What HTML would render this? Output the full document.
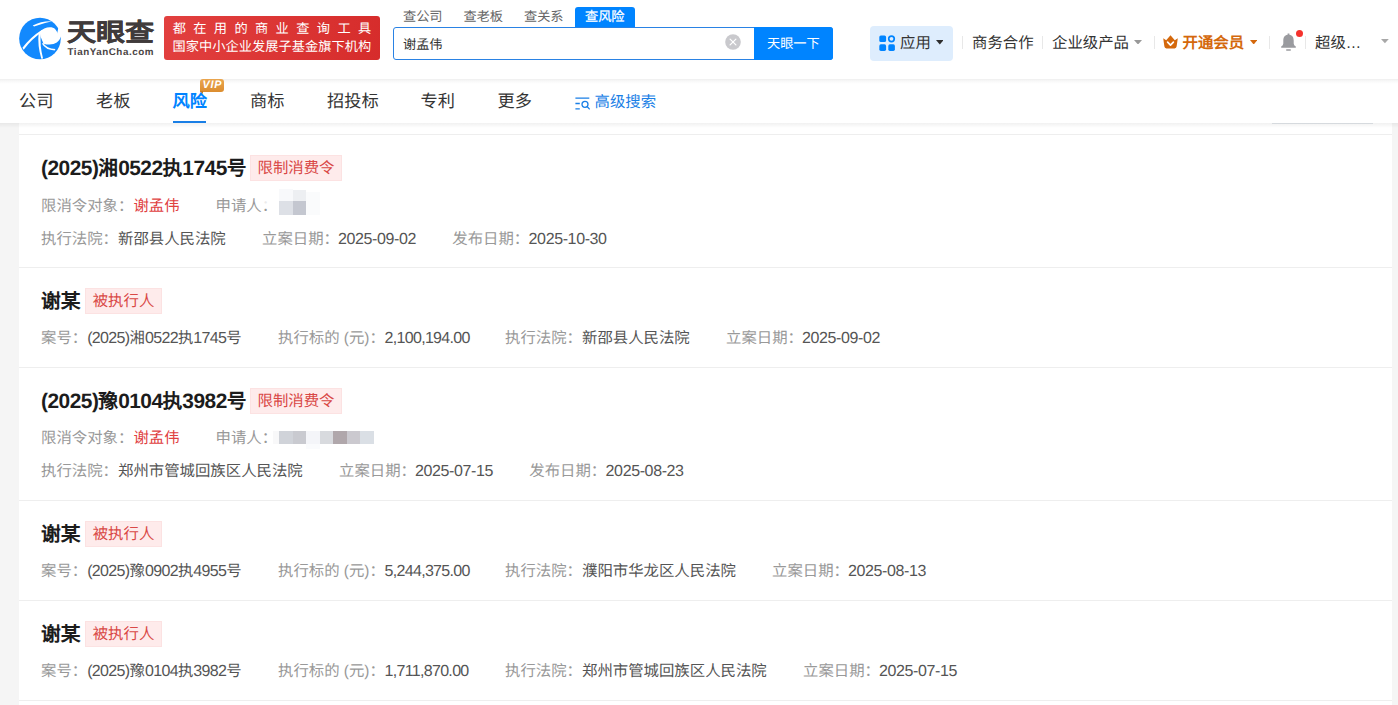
<!DOCTYPE html>
<html lang="zh-CN"><head><meta charset="utf-8"><title>天眼查</title><style>
*{margin:0;padding:0;box-sizing:border-box}
html,body{width:1398px;height:705px;overflow:hidden;background:#f5f5f5}
body{font-family:"Liberation Sans",sans-serif;color:#333;position:relative;font-size:15.4px;text-rendering:geometricPrecision}
.abs{position:absolute}
.t{position:absolute;white-space:nowrap;line-height:24px;height:24px;font-size:15.4px}
.hdr{position:absolute;left:0;top:0;width:1398px;height:79px;background:#fff}
.sub{position:absolute;left:0;top:79px;width:1398px;height:44px;background:linear-gradient(180deg,#efefef 0,#f8f8f8 2px,#fff 5px)}
.subsh{position:absolute;left:0;top:123px;width:1398px;height:5px;background:linear-gradient(180deg,rgba(0,0,0,.055),rgba(0,0,0,0))}
.card{position:absolute;left:19px;top:123px;width:1373px;height:582px;background:#fff}
.hr{position:absolute;left:19px;width:1373px;height:1px;background:#eeeeee}
i{font-style:normal}
.l{font-size:16px}
.tl{font-size:20.9px;position:relative;top:-0.8px}
.lb{color:#999}
.vl{color:#555}
.rd{color:#e0403f}
.ttl{position:absolute;white-space:nowrap;font-weight:bold;font-size:19.8px;line-height:28px;height:28px;color:#1c1c1c}
.tag{position:absolute;height:26px;line-height:25px;border:1px solid #fce2e2;background:#feebeb;color:#d94846;font-size:15.4px;text-align:center;white-space:nowrap}
.nav{position:absolute;white-space:nowrap;font-size:17.2px;line-height:26px;height:26px;color:#333;top:88.3px}
.hn{position:absolute;white-space:nowrap;font-size:15.4px;line-height:22px;height:22px;top:33px;color:#333}
.dv{position:absolute;top:36px;width:1px;height:13px;background:#e8e8e8}
.st{position:absolute;white-space:nowrap;font-size:13.2px;line-height:18px;height:18px;top:8px;color:#666}
</style></head><body>
<div class="hdr"></div>
<svg class="abs" style="left:14px;top:12px" width="56" height="52" viewBox="0 0 759 705">
<circle cx="352" cy="360" r="282" fill="#1389fd"/>
<g fill="#fff">
<path d="M348,272 C400,214 505,182 562,236 C585,260 593,290 587,308 L598,225 L680,225 L680,337 L634,337 C610,425 520,462 400,430 L362,340 Z"/>
<path d="M376,244 Q228,336 114,486 L131,512 Q242,364 390,266 Z"/>
<path d="M334,280 Q316,450 370,634 L394,630 Q346,450 364,290 Z"/>
<path d="M394,418 Q440,498 562,503 L552,522 Q425,516 380,432 Z"/>
<path d="M254,184 Q370,120 516,126 Q395,152 272,196 Z"/>
</g>
<path d="M586,308 C592,280 596,250 598,222 L640,300 Z" fill="#fff"/>
</svg>
<div class="abs" style="left:66.5px;top:17.3px;font-size:25px;line-height:32px;font-weight:bold;color:#403b3b;-webkit-text-stroke:0.35px #403b3b;white-space:nowrap;transform:scaleX(1.16);transform-origin:0 0" id="logot">天眼查</div>
<div class="abs" style="left:67.5px;top:46.1px;font-size:9.8px;line-height:14px;font-weight:bold;color:#4a4444;white-space:nowrap;letter-spacing:0.55px" id="logoe">TianYanCha.com</div>
<div class="abs" style="left:164px;top:16px;width:216px;height:44px;border-radius:3px;background:linear-gradient(100deg,#e2403f,#d62c2b)"></div>
<div class="abs" id="bn1" style="left:172.7px;top:19.5px;font-size:13.2px;line-height:18px;color:#fff;white-space:nowrap;letter-spacing:7.4px">都在用的商业查询工具</div>
<div class="abs" id="bn2" style="left:172.6px;top:38px;font-size:13.2px;line-height:18px;color:#fff;white-space:nowrap;letter-spacing:0.05px">国家中小企业发展子基金旗下机构</div>
<div class="st" style="left:403px">查公司</div>
<div class="st" style="left:463.5px">查老板</div>
<div class="st" style="left:524px">查关系</div>
<div class="abs" style="left:575px;top:7px;width:60px;height:21px;background:#0084ff;border-radius:3px 3px 0 0"></div>
<div class="st" style="left:585px;color:#fff;-webkit-text-stroke:0.25px #fff">查风险</div>
<div class="abs" style="left:393px;top:27px;width:440px;height:33px;border:1px solid #2a82e4;border-radius:3px;background:#fff"></div>
<div class="abs" style="left:403px;top:35.7px;font-size:13.2px;line-height:18px;color:#333;white-space:nowrap">谢孟伟</div>
<div class="abs" style="left:754px;top:27px;width:79px;height:33px;background:#0084ff;border-radius:0 3px 3px 0"></div>
<div class="abs" style="left:767px;top:35px;font-size:13.2px;line-height:18px;color:#fff;white-space:nowrap">天眼一下</div>
<svg class="abs" style="left:725px;top:34.2px" width="16" height="16" viewBox="0 0 16 16"><circle cx="8" cy="8" r="7.8" fill="#c9c9cd"/><path d="M5.1,5.1 L10.9,10.9 M10.9,5.1 L5.1,10.9" stroke="#fff" stroke-width="1.25" stroke-linecap="round"/></svg>
<div class="abs" style="left:870px;top:26px;width:83px;height:34.7px;background:#deedfd;border-radius:4px"></div>
<svg class="abs" style="left:879px;top:35px" width="17" height="17" viewBox="0 0 17 17"><g fill="#0084ff"><rect x="0.3" y="0.5" width="6.8" height="6.6" rx="1.6"/><rect x="0.3" y="9.3" width="6.8" height="6.6" rx="1.6"/><rect x="9.3" y="9.3" width="6.6" height="6.6" rx="1.6"/></g><circle cx="12.5" cy="3.8" r="2.75" fill="none" stroke="#0084ff" stroke-width="1.7"/></svg>
<div class="hn" style="left:900px">应用</div>
<svg class="abs" style="left:935.8px;top:40.3px" width="7.6" height="4.6" viewBox="0 0 7.6 4.6"><path d="M0,0 L7.6,0 L3.8,4.6 Z" fill="#2e2e2e"/></svg>
<div class="dv" style="left:962px"></div>
<div class="dv" style="left:1042px"></div>
<div class="dv" style="left:1153.5px"></div>
<div class="dv" style="left:1269px"></div>
<div class="dv" style="left:1304.5px"></div>
<div class="hn" style="left:972px">商务合作</div>
<div class="hn" style="left:1052px">企业级产品</div>
<svg class="abs" style="left:1133.8px;top:39.9px" width="8" height="4.6" viewBox="0 0 8 4.6"><path d="M0,0 L8,0 L4.0,4.6 Z" fill="#999"/></svg>
<svg class="abs" style="left:1163px;top:35px" width="15" height="14" viewBox="0 0 15 14"><path d="M0.2,3.2 L3.2,5.2 L7.5,0.2 L11.8,5.2 L14.8,3.2 L13.6,11.6 Q13.4,13.4 11.6,13.4 L3.4,13.4 Q1.6,13.4 1.4,11.6 Z" fill="#d4680c"/><path d="M4.6,7.2 L7.5,10.2 L10.4,7.2" fill="none" stroke="#fff" stroke-width="1.7" stroke-linecap="round" stroke-linejoin="round"/></svg>
<div class="hn" style="left:1182.5px;color:#d4680c;font-weight:bold">开通会员</div>
<svg class="abs" style="left:1249.8px;top:39.8px" width="7.4" height="4.5" viewBox="0 0 7.4 4.5"><path d="M0,0 L7.4,0 L3.7,4.5 Z" fill="#d4680c"/></svg>
<svg class="abs" style="left:1280px;top:33px" width="17" height="19" viewBox="0 0 17 19"><path d="M7.6,0.4 L9.4,0.4 L9.4,1.7 C12.6,2.2 13.7,4.6 13.7,7.4 L13.7,10.6 Q13.7,12.4 15.8,13.6 L15.8,14.8 L1.2,14.8 L1.2,13.6 Q3.3,12.4 3.3,10.6 L3.3,7.4 C3.3,4.6 4.4,2.2 7.6,1.7 Z" fill="#9a9b9f"/><rect x="6" y="16.2" width="5" height="1.6" rx="0.8" fill="#9a9b9f"/></svg>
<div class="abs" style="left:1296px;top:30px;width:7px;height:7px;border-radius:50%;background:#f5322d"></div>
<div class="hn" style="left:1315px">超级…</div>
<svg class="abs" style="left:1381.4px;top:39.4px" width="7.8" height="4.2" viewBox="0 0 7.8 4.2"><path d="M0,0 L7.8,0 L3.9,4.2 Z" fill="#a8a8a8"/></svg>
<div class="sub"></div>
<div class="nav" style="left:19px">公司</div>
<div class="nav" style="left:96px">老板</div>
<div class="nav" style="left:250px">商标</div>
<div class="nav" style="left:327px">招投标</div>
<div class="nav" style="left:420.5px">专利</div>
<div class="nav" style="left:497.5px">更多</div>
<div class="nav" style="left:172.5px;color:#0084ff;font-weight:bold">风险</div>
<div class="abs" style="left:173px;top:121px;width:33px;height:2px;background:#1a7fe6"></div>
<div class="abs" style="left:200px;top:79px;width:24px;height:12.5px;border-radius:3px 3px 3px 0;background:linear-gradient(180deg,#eaa64f,#dc8d2f)"></div>
<div class="abs" style="left:200px;top:91px;width:0;height:0;border-top:3px solid #c77a22;border-left:3px solid transparent"></div>
<div class="abs" id="vip" style="left:202.6px;top:79.2px;font-size:10.8px;line-height:12px;font-weight:bold;font-style:italic;color:#fff;letter-spacing:0.7px">VIP</div>
<svg class="abs" style="left:575px;top:97px" width="15" height="13" viewBox="0 0 15 13"><g fill="none" stroke="#1a7fe6" stroke-width="1.3"><path d="M0.4,1.2 L14.3,1.2 M0.4,6.5 L4.8,6.5 M0.4,11.8 L4.8,11.8"/><circle cx="10" cy="7.3" r="3"/><path d="M12.3,9.7 L14.3,11.9" stroke-linecap="round"/></g></svg>
<div class="abs" style="left:594.5px;top:91.5px;font-size:15.4px;line-height:22px;color:#1a7fe6;white-space:nowrap">高级搜索</div>
<div class="card"></div>
<div class="subsh"></div>
<div class="abs" style="left:1272px;top:123px;width:101px;height:1px;background:#d6dade"></div>
<div class="hr" style="top:134px"></div>
<div class="hr" style="top:267px"></div>
<div class="hr" style="top:367px"></div>
<div class="hr" style="top:500px"></div>
<div class="hr" style="top:600px"></div>
<div class="hr" style="top:700px"></div>
<span class="ttl" style="left:41px;top:155.4px"><i class="tl" style="letter-spacing:-0.51px">(2025)</i>湘<i class="tl" style="letter-spacing:-0.51px">0522</i>执<i class="tl" style="letter-spacing:-0.51px">1745</i>号</span>
<span class="tag" style="left:250px;top:155px;width:92px">限制消费令</span>
<span class="t lb" style="left:41px;top:194.5px;">限消令对象：</span>
<span class="t rd" style="left:133.4px;top:194.5px;">谢孟伟</span>
<span class="t lb" style="left:215.5px;top:194.5px;">申请人：</span>
<div class="abs" style="left:262.5px;top:196px;width:5px;height:8px;background:rgba(255,255,255,.8)"></div><div class="abs" style="left:279px;top:188.7px;width:13.8px;height:12.2px;background:#f8f9fb"></div><div class="abs" style="left:292.8px;top:189.7px;width:13.1px;height:11.2px;background:#edeff2"></div><div class="abs" style="left:279px;top:200.9px;width:13.8px;height:13.9px;background:#dde0e6"></div><div class="abs" style="left:292.8px;top:200.9px;width:13.1px;height:13.9px;background:#c4c7d0"></div><div class="abs" style="left:305.9px;top:192px;width:14px;height:22.8px;background:#fafbfc"></div>
<span class="t lb" style="left:41px;top:227.5px;">执行法院：</span>
<span class="t vl" style="left:118px;top:227.5px;">新邵县人民法院</span>
<span class="t lb" style="left:262px;top:227.5px;">立案日期：</span>
<span class="t vl" style="left:338px;top:227.5px;"><i class="l" style="letter-spacing:-0.38px">2025-09-02</i></span>
<span class="t lb" style="left:452.3px;top:227.5px;">发布日期：</span>
<span class="t vl" style="left:528.6px;top:227.5px;"><i class="l" style="letter-spacing:-0.38px">2025-10-30</i></span>
<span class="ttl" style="left:41px;top:288.4px">谢某</span>
<span class="tag" style="left:85px;top:288px;width:77px">被执行人</span>
<span class="t lb" style="left:41px;top:326.5px;">案号：</span>
<span class="t vl" style="left:87.2px;top:326.5px;"><i class="l" style="letter-spacing:-0.65px">(2025)</i>湘<i class="l" style="letter-spacing:-0.65px">0522</i>执<i class="l" style="letter-spacing:-0.65px">1745</i>号</span>
<span class="t lb" style="left:278px;top:326.5px;">执行标的 (元)：</span>
<span class="t vl" style="left:384.5px;top:326.5px;"><i class="l" style="letter-spacing:-0.68px">2,100,194.00</i></span>
<span class="t lb" style="left:505px;top:326.5px;">执行法院：</span>
<span class="t vl" style="left:582px;top:326.5px;">新邵县人民法院</span>
<span class="t lb" style="left:726px;top:326.5px;">立案日期：</span>
<span class="t vl" style="left:802px;top:326.5px;"><i class="l" style="letter-spacing:-0.38px">2025-09-02</i></span>
<span class="ttl" style="left:41px;top:388.4px"><i class="tl" style="letter-spacing:-0.51px">(2025)</i>豫<i class="tl" style="letter-spacing:-0.51px">0104</i>执<i class="tl" style="letter-spacing:-0.51px">3982</i>号</span>
<span class="tag" style="left:250px;top:388px;width:92px">限制消费令</span>
<span class="t lb" style="left:41px;top:426.5px;">限消令对象：</span>
<span class="t rd" style="left:133.4px;top:426.5px;">谢孟伟</span>
<span class="t lb" style="left:215.5px;top:426.5px;">申请人：</span>
<div class="abs" style="left:272.5px;top:431px;width:6.5px;height:12.8px;background:#f8f8f9"></div><div class="abs" style="left:279px;top:431px;width:14px;height:12.8px;background:#d0d3d9"></div><div class="abs" style="left:293px;top:431px;width:12.9px;height:12.8px;background:#c9cad0"></div><div class="abs" style="left:305.9px;top:431px;width:14.2px;height:12.8px;background:#f4f5f9"></div><div class="abs" style="left:320.1px;top:431px;width:13px;height:12.8px;background:#d8dade"></div><div class="abs" style="left:333.1px;top:431px;width:13.8px;height:12.8px;background:#b0a7ab"></div><div class="abs" style="left:346.9px;top:431px;width:13.1px;height:12.8px;background:#cbc9cf"></div><div class="abs" style="left:360px;top:431px;width:14px;height:12.8px;background:#dadfe5"></div><div class="abs" style="left:305.9px;top:443.8px;width:14.2px;height:5.7px;background:#fafbfd"></div>
<span class="t lb" style="left:41px;top:459.5px;">执行法院：</span>
<span class="t vl" style="left:118px;top:459.5px;">郑州市管城回族区人民法院</span>
<span class="t lb" style="left:339px;top:459.5px;">立案日期：</span>
<span class="t vl" style="left:415px;top:459.5px;"><i class="l" style="letter-spacing:-0.38px">2025-07-15</i></span>
<span class="t lb" style="left:529.3px;top:459.5px;">发布日期：</span>
<span class="t vl" style="left:605.6px;top:459.5px;"><i class="l" style="letter-spacing:-0.38px">2025-08-23</i></span>
<span class="ttl" style="left:41px;top:521.4px">谢某</span>
<span class="tag" style="left:85px;top:521px;width:77px">被执行人</span>
<span class="t lb" style="left:41px;top:559.5px;">案号：</span>
<span class="t vl" style="left:87.2px;top:559.5px;"><i class="l" style="letter-spacing:-0.65px">(2025)</i>豫<i class="l" style="letter-spacing:-0.65px">0902</i>执<i class="l" style="letter-spacing:-0.65px">4955</i>号</span>
<span class="t lb" style="left:278px;top:559.5px;">执行标的 (元)：</span>
<span class="t vl" style="left:384.5px;top:559.5px;"><i class="l" style="letter-spacing:-0.68px">5,244,375.00</i></span>
<span class="t lb" style="left:505px;top:559.5px;">执行法院：</span>
<span class="t vl" style="left:582px;top:559.5px;">濮阳市华龙区人民法院</span>
<span class="t lb" style="left:772px;top:559.5px;">立案日期：</span>
<span class="t vl" style="left:848px;top:559.5px;"><i class="l" style="letter-spacing:-0.38px">2025-08-13</i></span>
<span class="ttl" style="left:41px;top:621.4px">谢某</span>
<span class="tag" style="left:85px;top:621px;width:77px">被执行人</span>
<span class="t lb" style="left:41px;top:659.5px;">案号：</span>
<span class="t vl" style="left:87.2px;top:659.5px;"><i class="l" style="letter-spacing:-0.65px">(2025)</i>豫<i class="l" style="letter-spacing:-0.65px">0104</i>执<i class="l" style="letter-spacing:-0.65px">3982</i>号</span>
<span class="t lb" style="left:278px;top:659.5px;">执行标的 (元)：</span>
<span class="t vl" style="left:384.5px;top:659.5px;"><i class="l" style="letter-spacing:-0.68px">1,711,870.00</i></span>
<span class="t lb" style="left:505px;top:659.5px;">执行法院：</span>
<span class="t vl" style="left:582px;top:659.5px;">郑州市管城回族区人民法院</span>
<span class="t lb" style="left:803px;top:659.5px;">立案日期：</span>
<span class="t vl" style="left:879px;top:659.5px;"><i class="l" style="letter-spacing:-0.38px">2025-07-15</i></span>
</body></html>
